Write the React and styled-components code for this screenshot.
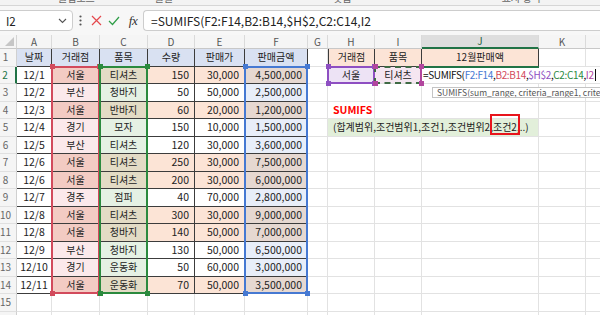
import React from 'react';
import styled, { createGlobalStyle } from 'styled-components';

const FONT = `"Noto Sans CJK KR", "Noto Sans", sans-serif`;

const GlobalStyle = createGlobalStyle`
  html, body { margin: 0; padding: 0; background: #fff; }
  body { width: 600px; height: 315px; overflow: hidden; font-family: ${FONT}; }
  * { box-sizing: border-box; }
`;

const Page = styled.div`
  width: 600px;
  height: 315px;
  overflow: hidden;
  display: flex;
  flex-direction: column;
  background: #fff;
`;

const RibbonEdge = styled.div`
  height: 6px;
  flex: none;
  background: #f3f3f3;
  border-bottom: 1px solid #d6d6d6;
  overflow: hidden;
  display: flex;
`;

const RibbonLabel = styled.span`
  font-size: 10px;
  line-height: 10px;
  margin-top: -7px;
  color: #666;
  margin-left: ${p => p.$ml}px;
  white-space: nowrap;
`;

const FormulaBar = styled.div`
  height: 29px;
  flex: none;
  background: #f7f7f7;
  display: flex;
  align-items: center;
`;

const NameBox = styled.div`
  width: 77px;
  height: 21px;
  margin-left: -4px;
  background: #fff;
  border: 1px solid #cdcdcd;
  border-radius: 4px;
  display: flex;
  align-items: center;
  justify-content: space-between;
  padding: 0 5px 0 9px;
  font-size: 11.5px;
  color: #222;
`;

const IconSlot = styled.div`
  width: ${p => p.$w}px;
  height: 21px;
  display: flex;
  align-items: center;
  justify-content: center;
  flex: none;
`;

const Fx = styled.span`
  font-family: "Liberation Serif", "DejaVu Serif", serif;
  font-style: italic;
  font-size: 13px;
  color: #333;
  letter-spacing: -0.5px;
`;

const FormulaInput = styled.div`
  flex: 1;
  height: 21px;
  background: #fff;
  border: 1px solid #cdcdcd;
  border-right: none;
  border-radius: 4px 0 0 4px;
  display: flex;
  align-items: center;
  padding-left: 7px;
  font-size: 12px;
  color: #222;
  white-space: nowrap;
  overflow: hidden;
`;

const Sheet = styled.div`
  display: grid;
  grid-template-columns: 17px 35px 48px 48px 47px 50px 63px 20px 47px 47px 117px 47px 47px;
  grid-template-rows: 14px repeat(16, 17.5px);
  width: 633px;
`;

const Corner = styled.div`
  grid-row: 1;
  grid-column: 1;
  background: #f5f5f5;
  border-right: 1px solid #d4d4d4;
  border-bottom: 1px solid #c8c8c8;
  display: flex;
  align-items: flex-end;
  justify-content: flex-end;
  padding: 0 2px 2px 0;
`;

const SelectAll = styled.div`
  width: 0;
  height: 0;
  border-left: 9px solid transparent;
  border-bottom: 9px solid #c6c6c6;
`;

const ColHead = styled.div`
  grid-row: 1;
  grid-column: ${p => p.$gc};
  background: ${p => (p.$active ? '#dedede' : '#f5f5f5')};
  border-right: 1px solid #dadada;
  border-bottom: ${p => (p.$active ? '2px solid #217346' : '1px solid #c8c8c8')};
  color: ${p => (p.$active ? '#1c5e38' : '#555')};
  font-size: 10px;
  line-height: 1;
  display: flex;
  align-items: center;
  justify-content: center;
`;

const RowHead = styled.div`
  grid-row: ${p => p.$gr};
  grid-column: 1;
  background: #f5f5f5;
  border-bottom: 1px solid #e0e0e0;
  border-right: ${p => (p.$active ? '2px solid #217346' : '1px solid #d0d0d0')};
  color: ${p => (p.$active ? '#217346' : '#666')};
  font-size: 10px;
  line-height: 1;
  display: flex;
  align-items: center;
  justify-content: center;
  padding-right: 5px;
`;

const Cell = styled.div`
  grid-row: ${p => p.$gr};
  grid-column: ${p => p.$gc};
  background: ${p => p.$bg || '#fff'};
  border-right: 1px solid ${p => (p.$dark ? '#3c3c3c' : '#e2e2e2')};
  border-bottom: 1px solid ${p => (p.$dark ? '#3c3c3c' : '#e2e2e2')};
  border-left: ${p => (p.$leftDark ? '1px solid #3c3c3c' : 'none')};
  color: #222;
  font-size: ${p => (p.$num ? '10.5px' : '10px')};
  line-height: 1;
  display: flex;
  align-items: center;
  justify-content: ${p => (p.$right ? 'flex-end' : 'center')};
  padding: ${p => (p.$right ? '0 5px 0 0' : '0')};
  white-space: nowrap;
  overflow: hidden;
`;

const Label = styled.div`
  grid-column: 9 / 12;
  grid-row: 5;
  color: #ff0000;
  font-weight: 700;
  font-size: 10.5px;
  line-height: 1;
  display: flex;
  align-items: center;
  padding-left: 5px;
  white-space: nowrap;
`;

const Merged = styled.div`
  grid-column: 9 / 12;
  grid-row: 6;
  background: #e2efda;
  border-bottom: 1px solid #e2e2e2;
  border-right: 1px solid #e2e2e2;
  font-size: 10px;
  color: #222;
  line-height: 1;
  display: flex;
  align-items: center;
  padding-left: 5px;
  white-space: nowrap;
`;

const Marked = styled.span`
  position: relative;
  display: inline-block;
  &::after {
    content: '';
    position: absolute;
    left: -3px;
    right: -3px;
    top: -8px;
    bottom: -3px;
    border: 2px solid #e8141c;
  }
`;

const RangeBox = styled.div`
  grid-column: ${p => p.$col};
  grid-row: ${p => p.$row};
  position: relative;
  margin: -1px 0 0 -1px;
  border: 2px ${p => (p.$dashed ? 'dashed' : 'solid')} ${p => p.$color};
  border-right: 2px solid ${p => p.$rightColor || p.$color};
  pointer-events: none;
`;

const Handle = styled.span`
  position: absolute;
  width: 5px;
  height: 5px;
  background: ${p => p.$color};
  ${p => (p.$top ? 'top: -3.5px;' : 'bottom: -3.5px;')}
  ${p => (p.$left ? 'left: -3.5px;' : 'right: -3.5px;')}
`;

const EditBox = styled.div`
  grid-column: 11 / 14;
  grid-row: 3;
  justify-self: start;
  background: #fff;
  display: flex;
  align-items: center;
  padding: 0 2px 0 1px;
  font-size: 10px;
  letter-spacing: -0.35px;
  line-height: 1;
  color: #111;
  white-space: nowrap;
  margin-bottom: 1px;
`;

const ActiveTop = styled.div`
  grid-column: 11 / 12;
  grid-row: 3;
  margin-top: -1px;
  border-top: 2px solid #217346;
  pointer-events: none;
`;

const Ref = styled.span`
  color: ${p => p.$c};
`;

const Caret = styled.span`
  display: inline-block;
  width: 1px;
  height: 12px;
  background: #111;
  margin-left: 1px;
`;

const Tooltip = styled.div`
  grid-column: 11 / 14;
  grid-row: 4;
  align-self: start;
  margin: 3px 0 0 10px;
  height: 11px;
  background: #fff;
  border: 1px solid #c4c4c4;
  font-size: 8.5px;
  line-height: 1;
  color: #555;
  display: flex;
  align-items: center;
  padding-left: 4px;
  white-space: nowrap;
  overflow: hidden;
`;

const C = {
  headBlue: '#d9e1f2',
  peach: '#fce4d6',
  bSeoul: '#f3cbc3',
  bOther: '#fbe9eb',
  cSeoul: '#e3dbc5',
  cOther: '#e5f1e4',
  fSeoul: '#e6d8d1',
  fOther: '#e8eef9',
  lav: '#ede3f5',
  pinkLav: '#f5e6f1',
};

const RED = '#d24a5c';
const GREEN = '#2b8a3e';
const BLUE = '#4679d2';
const PURPLE = '#8e4fc2';
const MAGENTA = '#b2469e';

const cols = ['A', 'B', 'C', 'D', 'E', 'F', 'G', 'H', 'I', 'J', 'K', 'L'];

const data = [
  ['12/1', '서울', '티셔츠', '150', '30,000', '4,500,000'],
  ['12/2', '부산', '청바지', '50', '50,000', '2,500,000'],
  ['12/3', '서울', '반바지', '60', '20,000', '1,200,000'],
  ['12/4', '경기', '모자', '150', '10,000', '1,500,000'],
  ['12/5', '부산', '티셔츠', '120', '30,000', '3,600,000'],
  ['12/6', '서울', '티셔츠', '250', '30,000', '7,500,000'],
  ['12/6', '서울', '티셔츠', '200', '30,000', '6,000,000'],
  ['12/7', '경주', '점퍼', '40', '70,000', '2,800,000'],
  ['12/8', '서울', '티셔츠', '300', '30,000', '9,000,000'],
  ['12/8', '서울', '청바지', '140', '50,000', '7,000,000'],
  ['12/9', '부산', '청바지', '130', '50,000', '6,500,000'],
  ['12/10', '경기', '운동화', '50', '60,000', '3,000,000'],
  ['12/11', '서울', '운동화', '70', '50,000', '3,500,000'],
];

const headers = ['날짜', '거래점', '품목', '수량', '판매가', '판매금액'];

function cellProps(r, c) {
  if (r === 1) {
    if (c <= 5) return { text: headers[c], bg: C.headBlue, dark: true };
    if (c === 7) return { text: '거래점', bg: C.peach, dark: true, leftDark: true };
    if (c === 8) return { text: '품목', bg: C.peach, dark: true };
    if (c === 9) return { text: '12월판매액', bg: C.peach, dark: true };
    return {};
  }
  if (r >= 2 && r <= 14 && c <= 5) {
    const row = data[r - 2];
    const seoul = row[1] === '서울';
    const bgs = [
      '#fff',
      seoul ? C.bSeoul : C.bOther,
      seoul ? C.cSeoul : C.cOther,
      seoul ? C.peach : '#fff',
      seoul ? C.peach : '#fff',
      seoul ? C.fSeoul : C.fOther,
    ];
    return { text: row[c], bg: bgs[c], dark: true, num: c >= 3 || c === 0, right: c >= 3 };
  }
  if (r === 2 && c === 7) return { text: '서울', bg: C.lav };
  if (r === 2 && c === 8) return { text: '티셔츠', bg: C.pinkLav };
  return {};
}

function Chevron() {
  return (
    <svg width="9" height="6" viewBox="0 0 9 6">
      <path d="M1 1 L4.5 4.5 L8 1" fill="none" stroke="#555" strokeWidth="1.1" />
    </svg>
  );
}

function Dots() {
  return (
    <svg width="3" height="11" viewBox="0 0 3 11">
      <circle cx="1.5" cy="1.5" r="1.1" fill="#555" />
      <circle cx="1.5" cy="5.5" r="1.1" fill="#555" />
      <circle cx="1.5" cy="9.5" r="1.1" fill="#555" />
    </svg>
  );
}

function Cross() {
  return (
    <svg width="11" height="11" viewBox="0 0 11 11">
      <path d="M1 1 L10 10 M10 1 L1 10" stroke="#e5484d" strokeWidth="1.2" fill="none" />
    </svg>
  );
}

function Check() {
  return (
    <svg width="12" height="10" viewBox="0 0 12 10">
      <path d="M1 5 L4.5 8.5 L11 1" stroke="#2f9e48" strokeWidth="1.2" fill="none" />
    </svg>
  );
}

function Range({ col, row, color, dashed, rightColor, handle }) {
  const h = handle || color;
  return (
    <RangeBox $col={col} $row={row} $color={color} $dashed={dashed} $rightColor={rightColor}>
      <Handle $color={h} $top $left />
      <Handle $color={h} $top />
      <Handle $color={h} $left />
      <Handle $color={h} />
    </RangeBox>
  );
}

export default function App() {
  const cells = [];
  for (let r = 1; r <= 16; r++) {
    cells.push(
      <RowHead key={`rh${r}`} $gr={r + 1} $active={r === 2}>
        {r}
      </RowHead>
    );
    for (let c = 0; c < cols.length; c++) {
      if (r === 5 && c >= 7 && c <= 9) continue;
      const p = cellProps(r, c);
      cells.push(
        <Cell
          key={`c${r}-${c}`}
          $gr={r + 1}
          $gc={c + 2}
          $bg={p.bg}
          $dark={p.dark}
          $leftDark={p.leftDark}
          $num={p.num}
          $right={p.right}
        >
          {p.text}
        </Cell>
      );
    }
  }

  return (
    <Page>
      <GlobalStyle />
      <RibbonEdge>
        <RibbonLabel $ml={58}>클립보드</RibbonLabel>
        <RibbonLabel $ml={60}>글꼴</RibbonLabel>
        <RibbonLabel $ml={160}>맞춤</RibbonLabel>
        <RibbonLabel $ml={150}>표시 형식</RibbonLabel>
      </RibbonEdge>
      <FormulaBar>
        <NameBox>
          <span>I2</span>
          <Chevron />
        </NameBox>
        <IconSlot $w={14}>
          <Dots />
        </IconSlot>
        <IconSlot $w={18}>
          <Cross />
        </IconSlot>
        <IconSlot $w={18}>
          <Check />
        </IconSlot>
        <IconSlot $w={20}>
          <Fx>fx</Fx>
        </IconSlot>
        <FormulaInput>=SUMIFS(F2:F14,B2:B14,$H$2,C2:C14,I2</FormulaInput>
      </FormulaBar>
      <Sheet>
        <Corner>
          <SelectAll />
        </Corner>
        {cols.map((l, i) => (
          <ColHead key={l} $gc={i + 2} $active={l === 'J'}>
            {l}
          </ColHead>
        ))}
        {cells}
        <Label>SUMIFS</Label>
        <Merged>
          (합계범위,조건범위1,조건1,조건범위2,<Marked>조건2</Marked>,..)
        </Merged>
        <Range col="3 / 4" row="3 / 16" color={RED} />
        <Range col="4 / 5" row="3 / 16" color={GREEN} />
        <Range col="7 / 8" row="3 / 16" color={BLUE} />
        <Range col="9 / 10" row="3 / 4" color={PURPLE} />
        <Range col="10 / 11" row="3 / 4" color="#3f6b45" dashed rightColor={MAGENTA} handle={MAGENTA} />
        <EditBox>
          =SUMIFS(<Ref $c={BLUE}>F2:F14</Ref>,<Ref $c={RED}>B2:B14</Ref>,<Ref $c={PURPLE}>$H$2</Ref>,
          <Ref $c={GREEN}>C2:C14</Ref>,<Ref $c={MAGENTA}>I2</Ref>
          <Caret />
        </EditBox>
        <ActiveTop />
        <Tooltip>SUMIFS(sum_range, criteria_range1, criteria1, [criteria_range2, criteria2], ...)</Tooltip>
      </Sheet>
    </Page>
  );
}
